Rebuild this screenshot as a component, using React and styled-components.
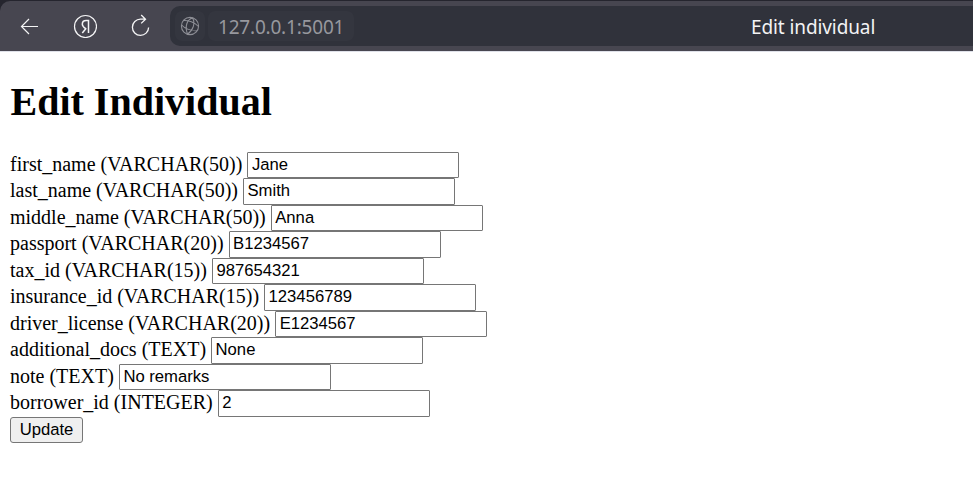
import React from "react";
import styled, { createGlobalStyle } from "styled-components";

const GlobalStyle = createGlobalStyle`
  * { box-sizing: border-box; }
  body { margin: 0; background: #fff; overflow: hidden; }
`;

const Frame = styled.div`
  background: #25252e;
  padding-top: 1px;
`;

const Toolbar = styled.header`
  height: 51px;
  display: flex;
  align-items: flex-start;
  background: #474650;
  border-top-left-radius: 10px;
  border-bottom: 1px solid #dfe1e9;
`;

const Navigation = styled.nav`
  width: 170px;
  height: 50px;
  flex: none;
  display: flex;
  align-items: center;
  gap: 32px;
  padding-left: 17px;
`;

const NavButton = styled.button`
  width: 24px;
  height: 24px;
  padding: 0;
  border: 0;
  background: none;
  color: #f4f4f5;
  svg { display: block; }
`;

const AddressBar = styled.div`
  flex: 1;
  height: 40px;
  margin-top: 5px;
  padding: 5px;
  display: flex;
  align-items: center;
  gap: 3px;
  background: #30323b;
  border-radius: 10px 0 0 10px;
  font-family: "Noto Sans", sans-serif;
`;

const SiteButton = styled.div`
  width: 30px;
  height: 30px;
  display: grid;
  place-items: center;
  background: #34363f;
  border-radius: 7px;
  color: #8d8e95;
`;

const Address = styled.div`
  width: 146px;
  height: 30px;
  padding-left: 10px;
  line-height: 32px;
  background: #34363f;
  border-radius: 7px;
  color: #97989e;
  font-size: 19px;
  letter-spacing: -0.2px;
  white-space: nowrap;
`;

const PageTitle = styled.div`
  height: 30px;
  margin-left: 394px;
  line-height: 32px;
  color: #f3f3f4;
  font-size: 19px;
  letter-spacing: -0.1px;
  white-space: nowrap;
`;

const Page = styled.main`
  padding: 25px 10px 0;
  font-family: "Liberation Serif", serif;
  font-size: 20px;
  color: #000;
`;

const Heading = styled.h1`
  margin: 0 0 27.95px;
  padding-left: 0.5px;
  height: 47px;
  line-height: 49px;
  font-size: 40px;
`;

const Field = styled.div`
  height: 26.5px;
  display: flex;
  align-items: flex-start;
  gap: 5px;
`;

const Label = styled.label`
  line-height: 24px;
  white-space: nowrap;
`;

const Input = styled.input`
  width: 212px;
  height: 26.5px;
  padding: 0 3.5px 0.9px;
  border: 1px solid #767676;
  border-radius: 1px;
  background: #fff;
  color: #000;
  font: 16.667px "Liberation Sans", sans-serif;
  outline: 0;
`;

const Submit = styled.button`
  display: block;
  width: 73px;
  height: 26px;
  padding: 0;
  border: 1px solid #767676;
  border-radius: 3px;
  background: #efefef;
  color: #000;
  font: 16.667px "Liberation Sans", sans-serif;
`;

const fields = [
  ["first_name", "VARCHAR(50)", "Jane"],
  ["last_name", "VARCHAR(50)", "Smith"],
  ["middle_name", "VARCHAR(50)", "Anna"],
  ["passport", "VARCHAR(20)", "B1234567"],
  ["tax_id", "VARCHAR(15)", "987654321"],
  ["insurance_id", "VARCHAR(15)", "123456789"],
  ["driver_license", "VARCHAR(20)", "E1234567"],
  ["additional_docs", "TEXT", "None"],
  ["note", "TEXT", "No remarks"],
  ["borrower_id", "INTEGER", "2"],
];

const BackIcon = () => (
  <svg width="24" height="24" fill="none" stroke="currentColor" strokeWidth="1.2">
    <path d="M21 12.5H4.5M12 5L4.5 12.5L12 20" />
  </svg>
);

const HomeIcon = () => (
  <svg width="24" height="24" fill="none" stroke="currentColor" strokeWidth="1.2">
    <circle cx="12.5" cy="12.5" r="11" />
    <path d="M15.5 19V6.5H13.2C10.5 6.5 9.3 8 9.3 10.2C9.3 12 10.2 13 13 14.8M13.2 14.2L9.3 19" strokeWidth="1.5" />
  </svg>
);

const ReloadIcon = () => (
  <svg width="24" height="24" fill="none" stroke="currentColor" strokeWidth="1.3">
    <path d="M19.6 13.5A8.1 8.1 0 1 1 11.5 5.2H16.5M12.2 1L16.5 5.2L12.2 9.4" />
  </svg>
);

const GlobeIcon = () => (
  <svg width="20" height="20" fill="none" stroke="currentColor" strokeWidth="1.1">
    <circle cx="10" cy="10" r="8.6" />
    <path d="M12.5 1.8C7 4 4.5 10 7.5 18.2M12.5 1.8C15.5 7 13.5 14 7.5 18.2M1.6 9C6 14 13 14.7 17 15M3.3 4.5C8 4 15 6.5 18.5 10.5" />
  </svg>
);

export default function App() {
  return (
    <>
      <GlobalStyle />
      <Frame>
        <Toolbar>
          <Navigation>
            <NavButton aria-label="Back"><BackIcon /></NavButton>
            <NavButton aria-label="Home"><HomeIcon /></NavButton>
            <NavButton aria-label="Reload"><ReloadIcon /></NavButton>
          </Navigation>
          <AddressBar>
            <SiteButton><GlobeIcon /></SiteButton>
            <Address>127.0.0.1:5001</Address>
            <PageTitle>Edit individual</PageTitle>
          </AddressBar>
        </Toolbar>
      </Frame>
      <Page>
        <Heading>Edit Individual</Heading>
        {fields.map(([name, type, value]) => (
          <Field key={name}>
            <Label htmlFor={name}>{name} ({type})</Label>
            <Input id={name} defaultValue={value} />
          </Field>
        ))}
        <Submit type="button">Update</Submit>
      </Page>
    </>
  );
}
